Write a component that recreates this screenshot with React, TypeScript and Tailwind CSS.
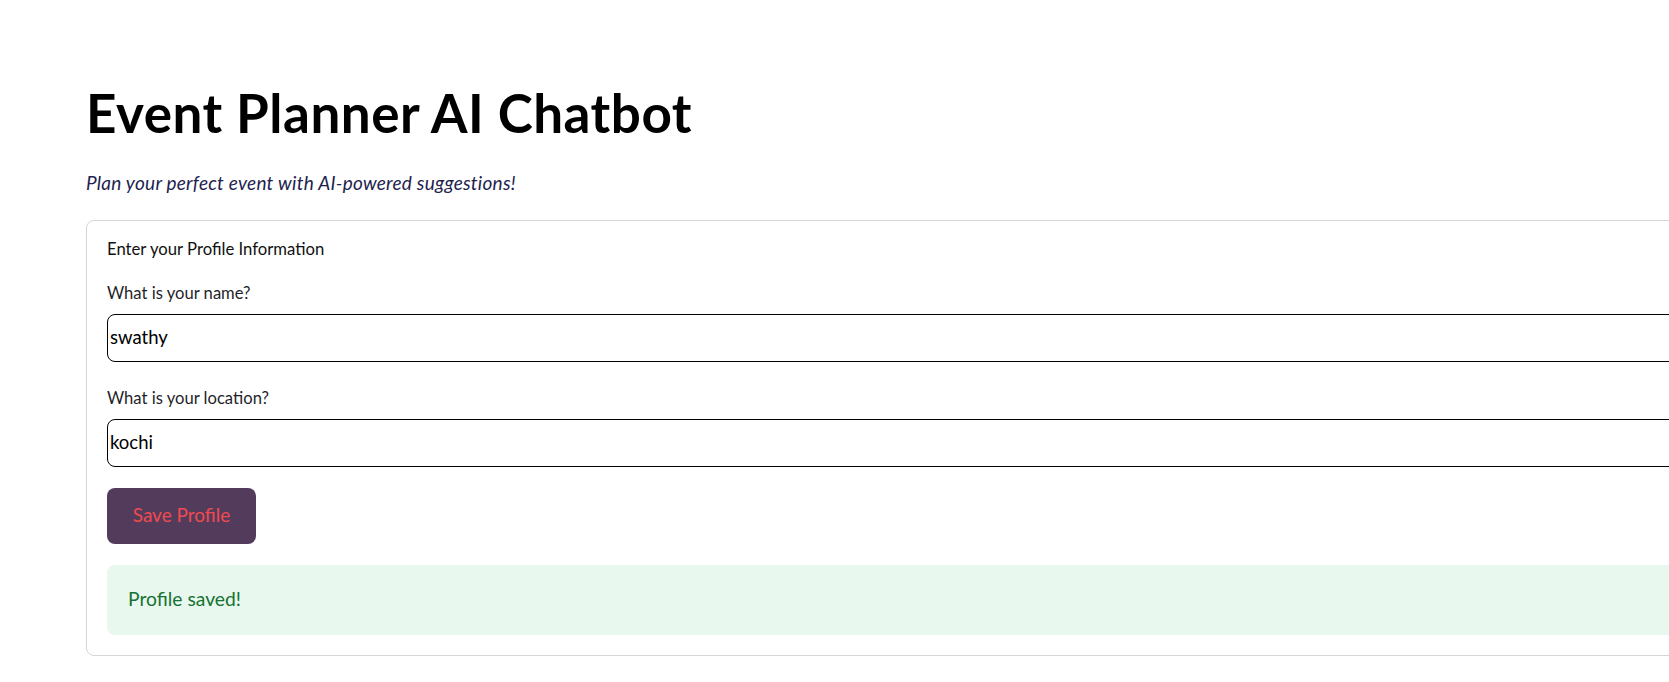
import React from "react";

export default function App() {
  return (
    <div
      className="w-screen h-[682px] overflow-hidden bg-white"
      style={{ fontFamily: "Lato, 'Noto Sans', sans-serif" }}
    >
      <div className="pl-[86px] pt-[81px] w-[1760px]">
        <h1 className="text-[53px] leading-[64px] font-bold text-black tracking-[0.5px]">
          Event Planner AI Chatbot
        </h1>
        <p className="mt-[25.5px] text-[19px] leading-[24px] italic text-[#231f4f] tracking-[0.25px]">
          Plan your perfect event with AI-powered suggestions!
        </p>
        <div className="mt-[25px] border border-[#d6d6d6] rounded-[8px] px-[20px] pt-[17px] pb-[20px] h-[436px]">
          <div className="text-[16.7px] leading-[22px] text-[#111]">
            Enter your Profile Information
          </div>
          <div className="mt-[22px] text-[16.6px] leading-[22px] text-[#1f1f2a]">
            What is your name?
          </div>
          <div className="mt-[10px] h-[48px] border-[1.5px] border-black rounded-[8px] flex items-center px-[2px] text-[18.5px] text-black">
            swathy
          </div>
          <div className="mt-[25px] text-[16.6px] leading-[22px] text-[#1f1f2a]">
            What is your location?
          </div>
          <div className="mt-[10px] h-[48px] border-[1.5px] border-black rounded-[8px] flex items-center px-[2px] text-[18.5px] text-black">
            kochi
          </div>
          <button className="mt-[21px] w-[149px] h-[56px] rounded-[8px] bg-[#533c5b] text-[#f04a50] text-[19px] flex items-center justify-center">
            Save Profile
          </button>
          <div className="mt-[21px] h-[70px] rounded-[8px] bg-[#e8f8ee] flex items-center px-[21px] text-[19.3px] text-[#177233]">
            Profile saved!
          </div>
        </div>
      </div>
    </div>
  );
}
